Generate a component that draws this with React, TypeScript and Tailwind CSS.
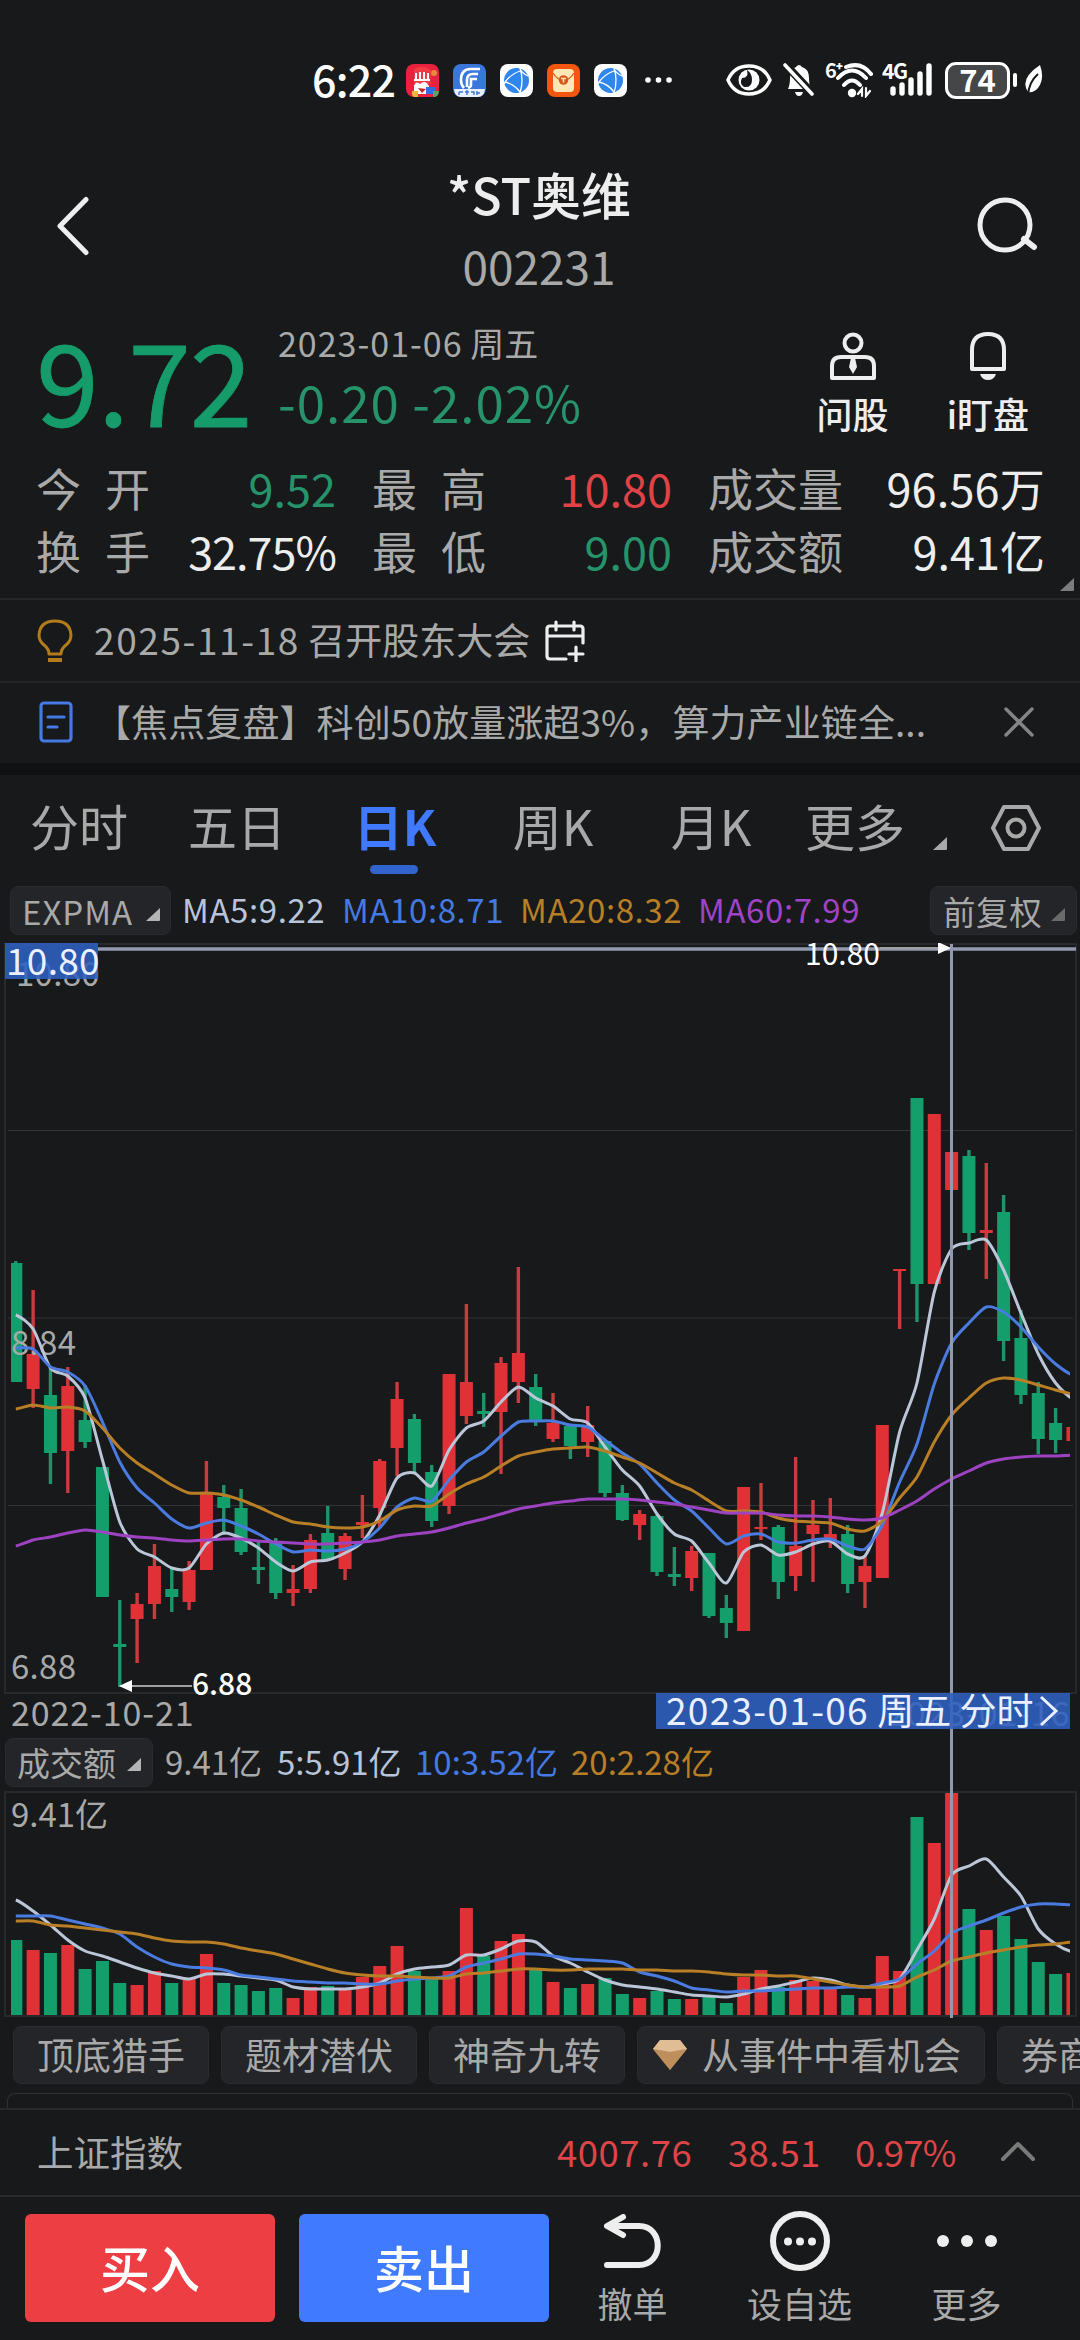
import type { ReactNode } from 'react';

type Dir = 'r' | 'g';
// [direction, high, body top, body bottom, low, volume bar height]
type Candle = [Dir, number, number, number, number, number];

const RED = '#e03236';
const GREEN = '#139e6b';
const WICK_RED = '#c93b3e';
const WICK_GREEN = '#20936a';
const STEP = 17.33;
const FIRST_X = 15.8;

const candles: Candle[] = [
  ['g', 1261, 1263, 1382, 1382, 75], ['r', 1290, 1354, 1389, 1408, 65], ['g', 1368, 1395, 1453, 1484, 62],
  ['r', 1367, 1386, 1451, 1493, 70], ['g', 1385, 1420, 1442, 1448, 46], ['g', 1467, 1467, 1597, 1597, 54],
  ['g', 1600, 1644, 1647, 1687, 32], ['r', 1593, 1604, 1619, 1663, 30], ['r', 1544, 1566, 1604, 1619, 44],
  ['g', 1568, 1589, 1597, 1612, 32], ['r', 1561, 1570, 1602, 1610, 36], ['r', 1461, 1493, 1570, 1570, 61],
  ['g', 1485, 1497, 1508, 1535, 32], ['g', 1489, 1508, 1552, 1555, 30], ['g', 1542, 1567, 1570, 1584, 24],
  ['g', 1538, 1541, 1593, 1599, 27], ['r', 1565, 1589, 1593, 1606, 17], ['r', 1534, 1540, 1589, 1593, 28],
  ['g', 1506, 1533, 1560, 1560, 29], ['r', 1533, 1536, 1569, 1580, 26], ['r', 1495, 1522, 1525, 1538, 38],
  ['r', 1459, 1461, 1508, 1528, 49], ['r', 1382, 1399, 1448, 1476, 69], ['g', 1414, 1419, 1463, 1474, 44],
  ['g', 1465, 1472, 1521, 1527, 36], ['r', 1374, 1374, 1506, 1514, 44], ['r', 1304, 1382, 1416, 1424, 107],
  ['g', 1393, 1411, 1414, 1427, 59], ['r', 1357, 1363, 1412, 1474, 74], ['r', 1267, 1353, 1382, 1403, 81],
  ['g', 1374, 1387, 1421, 1426, 46], ['r', 1393, 1423, 1439, 1442, 33], ['g', 1424, 1426, 1446, 1459, 27],
  ['r', 1406, 1425, 1442, 1457, 31], ['g', 1440, 1441, 1493, 1497, 37], ['g', 1485, 1493, 1520, 1521, 21],
  ['r', 1510, 1514, 1525, 1540, 17], ['g', 1515, 1516, 1572, 1576, 24], ['g', 1547, 1574, 1577, 1586, 16],
  ['r', 1546, 1551, 1578, 1591, 16], ['g', 1553, 1553, 1616, 1618, 18], ['g', 1595, 1608, 1623, 1638, 12],
  ['r', 1487, 1487, 1631, 1631, 38], ['r', 1483, 1527, 1529, 1540, 45], ['g', 1525, 1527, 1582, 1599, 28],
  ['r', 1457, 1546, 1576, 1591, 35], ['r', 1500, 1525, 1534, 1582, 34], ['r', 1498, 1534, 1541, 1548, 26],
  ['g', 1525, 1534, 1584, 1593, 20], ['r', 1556, 1566, 1582, 1608, 17], ['r', 1425, 1425, 1578, 1578, 59],
  ['r', 1269, 1269, 1271, 1329, 44], ['g', 1098, 1098, 1284, 1322, 198], ['r', 1114, 1114, 1284, 1284, 172],
  ['r', 1152, 1152, 1190, 1190, 222], ['g', 1150, 1156, 1233, 1250, 106], ['r', 1163, 1230, 1233, 1279, 85],
  ['g', 1195, 1212, 1341, 1361, 99], ['g', 1310, 1338, 1395, 1404, 76], ['g', 1382, 1393, 1439, 1454, 53],
  ['g', 1408, 1423, 1440, 1453, 41], ['r', 1427, 1427, 1441, 1441, 42],
];

const ma5 = [1315, 1329, 1368, 1376, 1398, 1460, 1522, 1549, 1557, 1568, 1568, 1544, 1533, 1538, 1548, 1562, 1571, 1562, 1560, 1553, 1542, 1515, 1478, 1473, 1486, 1450, 1428, 1421, 1402, 1387, 1398, 1406, 1419, 1423, 1447, 1470, 1486, 1514, 1534, 1541, 1563, 1583, 1552, 1545, 1555, 1552, 1544, 1541, 1554, 1556, 1513, 1432, 1383, 1292, 1249, 1243, 1240, 1270, 1313, 1354, 1383, 1399];
const ma10 = [1348, 1349, 1367, 1372, 1386, 1422, 1462, 1488, 1503, 1519, 1528, 1523, 1520, 1526, 1534, 1544, 1552, 1550, 1551, 1549, 1542, 1528, 1507, 1498, 1501, 1480, 1462, 1452, 1436, 1422, 1421, 1421, 1425, 1427, 1440, 1453, 1464, 1483, 1500, 1511, 1528, 1544, 1536, 1534, 1542, 1543, 1540, 1539, 1546, 1549, 1525, 1482, 1444, 1384, 1343, 1323, 1307, 1312, 1327, 1347, 1364, 1375];
const ma20 = [1409, 1405, 1408, 1407, 1411, 1428, 1448, 1463, 1474, 1485, 1493, 1493, 1495, 1500, 1507, 1515, 1522, 1524, 1527, 1528, 1527, 1521, 1510, 1506, 1506, 1494, 1484, 1477, 1466, 1456, 1452, 1449, 1448, 1447, 1451, 1457, 1463, 1473, 1483, 1490, 1501, 1511, 1511, 1512, 1518, 1521, 1522, 1523, 1529, 1531, 1521, 1498, 1477, 1442, 1415, 1398, 1383, 1378, 1380, 1385, 1390, 1394];
const ma60 = [1546, 1540, 1537, 1533, 1530, 1532, 1535, 1537, 1538, 1540, 1541, 1540, 1539, 1539, 1541, 1542, 1543, 1544, 1544, 1543, 1542, 1540, 1536, 1534, 1532, 1528, 1523, 1519, 1514, 1509, 1506, 1503, 1501, 1499, 1499, 1499, 1500, 1502, 1504, 1507, 1510, 1513, 1513, 1513, 1515, 1516, 1516, 1517, 1519, 1520, 1518, 1510, 1501, 1489, 1479, 1471, 1463, 1459, 1457, 1456, 1456, 1455];
const vol5 = [1900, 1911, 1925, 1940, 1951, 1956, 1962, 1968, 1973, 1976, 1979, 1974, 1974, 1976, 1978, 1980, 1987, 1989, 1989, 1989, 1987, 1983, 1974, 1969, 1967, 1965, 1955, 1955, 1949, 1941, 1942, 1956, 1963, 1972, 1980, 1985, 1987, 1989, 1992, 1995, 1996, 1997, 1994, 1989, 1986, 1982, 1978, 1980, 1985, 1987, 1984, 1979, 1950, 1919, 1875, 1866, 1859, 1877, 1896, 1929, 1944, 1952];
const vol10 = [1916, 1916, 1916, 1920, 1924, 1928, 1934, 1947, 1957, 1964, 1967, 1968, 1970, 1975, 1977, 1979, 1981, 1982, 1983, 1983, 1984, 1984, 1981, 1979, 1978, 1976, 1967, 1963, 1959, 1954, 1954, 1956, 1959, 1960, 1961, 1963, 1972, 1976, 1981, 1988, 1990, 1992, 1991, 1991, 1990, 1989, 1988, 1988, 1987, 1987, 1983, 1979, 1964, 1951, 1933, 1926, 1920, 1913, 1907, 1904, 1904, 1905];
const vol20 = [1921, 1921, 1925, 1926, 1928, 1930, 1932, 1934, 1938, 1941, 1942, 1942, 1944, 1948, 1951, 1954, 1959, 1964, 1969, 1973, 1975, 1976, 1976, 1977, 1978, 1978, 1974, 1973, 1971, 1969, 1969, 1970, 1970, 1969, 1969, 1969, 1970, 1970, 1971, 1971, 1972, 1974, 1975, 1975, 1976, 1976, 1979, 1982, 1985, 1987, 1987, 1986, 1977, 1970, 1961, 1957, 1953, 1950, 1947, 1945, 1944, 1942];

const xAt = (i: number) => FIRST_X + i * STEP;

// smooth curve through all points
const toPath = (ys: number[]) => {
  let d = `M${xAt(0)} ${ys[0]}`;
  for (let i = 0; i < ys.length - 1; i++) {
    const y0 = ys[Math.max(i - 1, 0)];
    const y3 = ys[Math.min(i + 2, ys.length - 1)];
    const c1 = ys[i] + (ys[i + 1] - y0) / 8;
    const c2 = ys[i + 1] - (y3 - ys[i]) / 8;
    d += `C${xAt(i) + STEP / 4} ${c1} ${xAt(i + 1) - STEP / 4} ${c2} ${xAt(i + 1)} ${ys[i + 1]}`;
  }
  return d;
};

const Curve = ({ ys, color }: { ys: number[]; color: string }) => (
  <path d={toPath(ys)} fill="none" stroke={color} strokeWidth="3" strokeLinejoin="round" />
);

const Corner = ({ className = 'text-[#b4b4b4]' }: { className?: string }) => (
  <svg viewBox="0 0 14 13" className={`h-[13px] w-[14px] ${className}`}>
    <path d="M14 0V12Q14 13 13 13H0Z" fill="currentColor" />
  </svg>
);

const GlobeApp = () => (
  <svg viewBox="0 0 33 33" className="size-[33px]">
    <rect width="33" height="33" rx="8" fill="#fff" />
    <circle cx="16.5" cy="16.5" r="12.5" fill="#2f86ee" />
    <path d="M20 4Q24 16 20 29M5 18Q11 10 20 7M5 18Q14 20 20 28M20 5Q23 10 28 12M5 18L4 20" fill="none" stroke="#fff" strokeWidth="1.3" />
  </svg>
);

const StatusBar = () => (
  <div className="flex h-[160px] items-center pl-[312px]">
    <span className="mb-[4px] w-[94px] text-[43px] leading-none font-medium tracking-[-0.8px] text-white">6:22</span>
    <div className="flex gap-[14px]">
      <svg viewBox="0 0 33 33" className="size-[33px]">
        <rect width="33" height="33" rx="8" fill="#e9213f" />
        <path d="M8 5Q17 0 25 6V20H8Z" fill="#f13a45" />
        <path d="M10 9v7M14 8v8M18 8v8M22 9v7M8 16h16" stroke="#fff" strokeWidth="2" />
        <circle cx="28" cy="9" r="3" fill="#e88a3c" />
        <path d="M8 22Q10 16 14 20Q19 15 23 22V30H8Z" fill="#fff" />
        <path d="M12 24l8 1-4 4Z" fill="#c9242b" />
        <path d="M6 27h6v6H8q-2-1-2-3Z" fill="#f4b73a" />
        <rect x="20" y="23" width="9" height="7" fill="#2f6fe0" />
        <path d="M27 27h6q0 5-4 6h-2Z" fill="#5aa55a" />
      </svg>
      <svg viewBox="0 0 33 33" className="size-[33px]">
        <rect width="33" height="33" rx="8" fill="#3a77dc" />
        <path d="M27 5H18Q8 5 8 16Q8 21 11 24M25 10H20Q14 10 14 16V23M24 15H18V21Q18 23 15 24" fill="none" stroke="#fff" strokeWidth="2.6" />
        <path d="M1 25H32Q31 33 25 33H8Q2 33 1 25Z" fill="#e8f1fc" />
        <path d="M6 28h4M6 28v3M12 28h4M14 26v5M18 28h3v3M24 27v4M23 29h4" stroke="#3a77dc" strokeWidth="1.4" fill="none" />
      </svg>
      <GlobeApp />
      <svg viewBox="0 0 33 33" className="size-[33px]">
        <rect width="33" height="33" rx="8" fill="#f4560f" />
        <rect x="6" y="5" width="21" height="23" rx="4" fill="#ffe7b5" />
        <path d="M6 9Q10 16 16.5 16Q23 16 27 9" fill="none" stroke="#d9661f" strokeWidth="1.5" />
        <circle cx="16.5" cy="16" r="4.8" fill="#d9581c" />
        <path d="M14 14.5h5M16.5 14.5v4" stroke="#ffe7b5" strokeWidth="1.5" />
      </svg>
      <GlobeApp />
    </div>
    <svg viewBox="0 0 28 6" className="ml-[18px] h-[6px] w-[28px]" fill="#fff">
      <circle cx="3" cy="3" r="2.8" />
      <circle cx="13.5" cy="3" r="2.8" />
      <circle cx="24" cy="3" r="2.8" />
    </svg>
    <svg viewBox="0 0 46 32" className="ml-[53px] h-[32px] w-[46px]">
      <path d="M2 16Q8 2 23 2T44 16Q38 30 23 30T2 16Z" fill="none" stroke="#fff" strokeWidth="3.4" />
      <circle cx="23" cy="16" r="10.5" fill="#fff" />
      <path d="M21 6Q23 14 16 14Q13 20 18 23Q26 24 26 16Q26 9 21 6Z" fill="#17191a" />
    </svg>
    <svg viewBox="0 0 32 34" className="ml-[11px] h-[34px] w-[32px]">
      <path d="M5 26Q7 22 7 15Q7 6 13 4Q16 0 19 4Q26 6 26 15Q26 22 28 26Z" fill="#fff" />
      <path d="M12 29h8q-1 4-4 4t-4-4Z" fill="#fff" />
      <path d="M1 0L31 32" stroke="#17191a" strokeWidth="8" />
      <path d="M2 2L29 31" stroke="#fff" strokeWidth="3.6" strokeLinecap="round" />
    </svg>
    <div className="relative ml-[10px] h-[36px] w-[48px]">
      <span className="absolute top-[-2px] left-0 text-[20px] leading-none font-bold tracking-[-1px] text-white">6⁺</span>
      <svg viewBox="0 0 48 36" className="h-[36px] w-[48px]" fill="none" stroke="#fff" strokeWidth="4" strokeLinecap="round">
        <path d="M21 5Q36-1 46 12M13 16Q27 1 41 16M19 23Q27 14 35 23" />
        <circle cx="27" cy="31" r="4.2" fill="#fff" stroke="none" />
        <path d="M37 34V27L33 32M41 26V34L45 29" strokeWidth="2.2" />
      </svg>
    </div>
    <div className="relative ml-[9px] h-[36px] w-[52px]">
      <span className="absolute top-[-2px] left-0 text-[21px] leading-none font-bold tracking-[-1.5px] text-white">4G</span>
      <svg viewBox="0 0 52 36" className="h-[36px] w-[52px]" stroke="#fff" strokeWidth="5.4" strokeLinecap="round">
        <path d="M11 27V31M20 23V31M29 18V31M38 12V31M47 4V31" />
      </svg>
    </div>
    <div className="ml-[11px] flex h-[37px] w-[65px] items-center justify-center rounded-[11px] border-[3px] border-white bg-[#454648] text-[31px] leading-none font-bold text-white">
      <span className="mb-[4px]">74</span>
    </div>
    <div className="ml-[3px] h-[14px] w-[4px] rounded bg-white" />
    <svg viewBox="0 0 20 30" className="ml-[6px] h-[30px] w-[20px]">
      <path d="M17 0Q22 14 15 23Q11 28 5 27Q-4 14 17 0Z" fill="#fff" />
      <path d="M15 9Q6 17 5 30" stroke="#17191a" strokeWidth="2" fill="none" />
    </svg>
  </div>
);

const Header = () => (
  <header className="flex h-[140px] items-center justify-between px-[41px]">
    <svg viewBox="0 0 60 60" className="mb-2 size-[60px]">
      <path d="M45 3.5L19 30L45 56.5" fill="none" stroke="#eee" strokeWidth="5" strokeLinecap="round" strokeLinejoin="round" />
    </svg>
    <div className="text-center">
      <h1 className="h-[70px] text-[50px] leading-[67px] font-medium text-[#ededed]">*ST奥维</h1>
      <p className="h-[70px] text-[46px] leading-[70px] text-[#a9a9a9]">002231</p>
    </div>
    <svg viewBox="0 0 62 60" className="mb-2 h-[60px] w-[62px]" fill="none" stroke="#eee" strokeWidth="5">
      <circle cx="28" cy="29" r="25" />
      <path d="M47 43L57 51" strokeWidth="6" strokeLinecap="round" />
    </svg>
  </header>
);

const Quote = () => (
  <section className="flex h-[156px] items-center pt-1 pr-[51px] pl-[36px]">
    <div className="mb-[4px] w-[242px] text-[113px] leading-none font-normal tracking-[-1px] text-[#159c6a] [-webkit-text-stroke:0.8px_#159c6a]">9.72</div>
    <div className="mb-4 whitespace-nowrap">
      <div className="h-[58px] text-[34px] leading-[58px] text-[#a9a9a9]"><span className="tracking-[1px]">2023-01-06</span> 周五</div>
      <div className="h-[58px] text-[51px] leading-[58px] tracking-[1px] text-[#26936a]">-0.20 -2.02%</div>
    </div>
    <div className="mt-[10px] ml-auto flex gap-[58px] text-[36px] leading-[50px] font-medium text-[#ededed]">
      <div className="flex flex-col items-center gap-[8px]">
        <svg viewBox="0 0 46 48" className="h-[48px] w-[46px]" fill="none" stroke="#eee" strokeWidth="4">
          <circle cx="23" cy="11" r="8.5" />
          <path d="M2 46V34Q2 25 11 25H35Q44 25 44 34V46Z" strokeLinejoin="round" />
          <path d="M21 26h4l2 9-4 7-4-7Z" fill="#eee" stroke="none" />
        </svg>
        问股
      </div>
      <div className="flex flex-col items-center gap-[8px]">
        <svg viewBox="0 0 40 48" className="h-[48px] w-[40px]">
          <path d="M4 37V18Q4 2 20 2T36 18V37Z" fill="none" stroke="#eee" strokeWidth="4" strokeLinejoin="round" />
          <path d="M12 42H28Q26 48 20 48T12 42Z" fill="#eee" />
        </svg>
        i盯盘
      </div>
    </div>
  </section>
);

interface StatProps {
  label: ReactNode;
  value: string;
  className: string;
}

const Stat = ({ label, value, className }: StatProps) => (
  <div className="flex h-[63px] items-center justify-between text-[45px] leading-none whitespace-nowrap">
    <span className="text-[#a9a9a9]">{label}</span>
    <span className={className}>{value}</span>
  </div>
);

const spaced = (text: string) => (
  <span className="flex w-[114px] justify-between">
    <span>{text[0]}</span>
    <span>{text[1]}</span>
  </span>
);

const Stats = () => (
  <section className="relative h-[142px]">
    <div className="grid grid-cols-[300px_300px_337px] gap-x-[36px] pl-[36px]">
      <Stat label={spaced('今开')} value="9.52" className="text-[#26936a]" />
      <Stat label={spaced('最高')} value="10.80" className="text-[#e04246]" />
      <Stat label="成交量" value="96.56万" className="tracking-[0.2px] text-[#ededed]" />
      <Stat label={spaced('换手')} value="32.75%" className="tracking-[-1px] text-[#ededed]" />
      <Stat label={spaced('最低')} value="9.00" className="text-[#26936a]" />
      <Stat label="成交额" value="9.41亿" className="text-[#ededed]" />
    </div>
    <Corner className="absolute right-[6px] bottom-[7px] text-[#7d7d7d]" />
  </section>
);

const News = () => (
  <section className="text-[37px] leading-none text-[#a9a9a9]">
    <div className="flex h-[83px] items-center border-t-2 border-[#242628] pl-[37px]">
      <svg viewBox="0 0 36 44" className="h-[44px] w-[36px]" fill="none" stroke="#b27c1c" strokeWidth="3">
        <path d="M12 35Q12 30 7 26Q2 22 2 16Q3 2 18 2T34 16Q34 22 29 26Q24 30 24 35Z" strokeLinejoin="round" />
        <path d="M11 41H25" strokeWidth="4" />
      </svg>
      <span className="mb-[3px] ml-[21px]"><span className="tracking-[1.6px]">2025-11-18</span> 召开股东大会</span>
      <svg viewBox="0 0 42 42" className="ml-[14px] size-[42px]" fill="none" stroke="#eee" strokeWidth="3.2" strokeLinecap="round">
        <path d="M22 39H6Q3 39 3 36V9Q3 6 6 6H36Q39 6 39 9V23M3 16H39M12 2V10M30 2V10M32 27V41M25 34H39" />
      </svg>
    </div>
    <div className="flex h-[82px] items-center border-t-2 border-[#242628] pl-[39px]">
      <svg viewBox="0 0 34 42" className="mb-[2px] h-[42px] w-[34px]" fill="none" stroke="#4579e4" strokeWidth="3.2">
        <rect x="2" y="2" width="30" height="38" rx="3" />
        <path d="M9 16H25M9 26H18" strokeLinecap="round" />
      </svg>
      <span className="mb-[4px] ml-[21px] tracking-[0.1px] whitespace-nowrap">【焦点复盘】科创50放量涨超3%，算力产业链全...</span>
      <svg viewBox="0 0 30 30" className="mr-[46px] mb-[2px] ml-auto size-[30px]" stroke="#858585" strokeWidth="3.4" strokeLinecap="round">
        <path d="M2 2L28 28M28 2L2 28" />
      </svg>
    </div>
    <div className="h-[12px] bg-[#101113]" />
  </section>
);

const periods = ['分时', '五日', '日K', '周K', '月K'];

const PeriodTabs = () => (
  <nav className="flex h-[111px] text-[49px] leading-none text-[#a9a9a9]">
    {periods.map((name) => (
      <div key={name} className={`relative w-[158px] pt-[25px] text-center ${name === '日K' ? 'font-bold text-[#4079fb]' : ''}`}>
        {name}
        {name === '日K' && <i className="absolute top-[90px] left-[54px] h-[9px] w-[48px] rounded-full bg-[#3264cd]" />}
      </div>
    ))}
    <div className="ml-[15px] pt-[25px] text-[50px]">更多</div>
    <Corner className="mt-[62px] ml-[28px]" />
    <svg viewBox="0 0 52 48" className="mt-[29px] ml-[43px] h-[48px] w-[52px]" fill="none" stroke="#a9a9a9" strokeWidth="4" strokeLinejoin="round">
      <path d="M14 3H38L49 24L38 45H14L3 24Z" />
      <circle cx="26" cy="24" r="8.5" />
    </svg>
  </nav>
);

const Pill = ({ className, children }: { className: string; children: ReactNode }) => (
  <div className={`flex h-[49px] shrink-0 items-center rounded-lg border border-[#2a2b2e] bg-[#242528] text-[#a9a9a9] ${className}`}>{children}</div>
);

const labelFont = '"Noto Sans CJK SC", sans-serif';

const PriceChart = () => (
  <svg viewBox="0 943 1080 795" className="block h-[795px] w-[1080px]" fontFamily={labelFont}>
    <g stroke="#28292c" strokeWidth="2" fill="none">
      <path d="M5 1693V944H1076V1693Z" />
      <path d="M8 1130.5H1073M8 1505.5H1073" stroke="#343536" strokeWidth="1" />
      <path d="M8 1318H1073" stroke="#232527" />
    </g>
    <clipPath id="plot">
      <rect x="11" y="943" width="1059" height="1080" />
    </clipPath>
    <g clipPath="url(#plot)">
      {candles.map(([dir, high, top, bottom, low], i) => (
        <g key={i}>
          <rect x={xAt(i) - 1.7} y={high} width="3.4" height={low - high} fill={dir === 'r' ? WICK_RED : WICK_GREEN} />
          <rect x={xAt(i) - 6.5} y={top} width="13" height={bottom - top} fill={dir === 'r' ? RED : GREEN} />
        </g>
      ))}
    </g>
    <g fill="#a9a9a9" fontSize="33" letterSpacing="0.300">
      <text x="16" y="986">10.80</text>
      <text x="11" y="1355">8.84</text>
      <text x="11" y="1679">6.88</text>
      <text x="11" y="1726" fontSize="34" letterSpacing="0.900">2022-10-21</text>
      <text x="887" y="1726" fontSize="34" letterSpacing="0.900">2023-01-16</text>
    </g>
    <g clipPath="url(#plot)">
      <Curve ys={ma5} color="#bcc6d9" />
      <Curve ys={ma10} color="#4a7ce0" />
      <Curve ys={ma20} color="#b97f26" />
      <Curve ys={ma60} color="#9d43c2" />
    </g>
    <path d="M98 949H1076" stroke="#9299ae" strokeWidth="3.5" />
    <path d="M192 1686H130M880 948H940" stroke="#a0a0a0" strokeWidth="2" />
    <path d="M119 1686L132 1680V1692ZM951 948L938 942V954Z" fill="#fff" />
    <g fill="#fff" fontSize="30">
      <text x="192" y="1695" fontWeight="500">6.88</text>
      <text x="805" y="965">10.80</text>
    </g>
  </svg>
);

const VolumeChart = () => (
  <svg viewBox="0 1790 1080 228" className="block h-[228px] w-[1080px]" fontFamily={labelFont}>
    <path d="M5 2016V1792H1076V2016Z" fill="none" stroke="#28292c" strokeWidth="2" />
    <g clipPath="url(#volume)">
      <clipPath id="volume">
        <rect x="11" y="1790" width="1059" height="228" />
      </clipPath>
      {candles.map(([dir, , , , , vol], i) => (
        <rect key={i} x={xAt(i) - 6.5} y={2015 - vol} width="13" height={vol} fill={dir === 'r' ? RED : GREEN} />
      ))}
      <Curve ys={vol5} color="#bcc6d9" />
      <Curve ys={vol10} color="#4a7ce0" />
      <Curve ys={vol20} color="#b97f26" />
    </g>
    <text x="11" y="1827" fontSize="33" fill="#a9a9a9">9.41亿</text>
  </svg>
);

const Charts = () => (
  <section className="relative">
    <PriceChart />
    <div className="flex h-[52px] items-start pl-[5px] text-[33px] leading-[47px] whitespace-nowrap">
      <Pill className="w-[148px] justify-between pr-[11px] pl-[11px] text-[33px]">
        成交额
        <Corner className="mt-1 text-[#b4b4b4]" />
      </Pill>
      <span className="ml-[12px] w-[112px] text-[#a9a9a9]">9.41亿</span>
      <span className="w-[138px] text-[#b9c4da]">5:5.91亿</span>
      <span className="w-[156px] text-[#4579e4]">10:3.52亿</span>
      <span className="text-[#b97f26]">20:2.28亿</span>
    </div>
    <VolumeChart />
    {/* crosshair and its labels */}
    <div className="absolute top-[1px] left-[950px] h-[1074px] w-[3px] bg-[#9299ae]" />
    <div className="absolute top-0 left-[5px] h-[36px] w-[93px] bg-[#2f60c0]/88 pl-[1px] text-[37px] leading-[32px] tracking-[0.3px] text-[#eaf0ff]">10.80</div>
    <div className="absolute top-[750px] left-[656px] flex h-[36px] w-[414px] items-center bg-[#2f60c0]/88 pl-[10px] text-[37px] leading-[32px] whitespace-nowrap text-[#eaf0ff]">
      <span className="mb-1"><span className="tracking-[1.3px]">2023-01-06</span> 周五 分时</span>
      <svg viewBox="0 0 20 32" className="ml-[5px] h-[32px] w-[20px]">
        <path d="M2 2L17 16L2 30" fill="none" stroke="#eaf0ff" strokeWidth="3" />
      </svg>
    </div>
  </section>
);

const Chip = ({ children }: { children: ReactNode }) => (
  <div className="flex h-[58px] shrink-0 items-center rounded-lg border border-[#2a2b2e] bg-[#242528] px-[23px] pb-px">{children}</div>
);

const Chips = () => (
  <div className="mt-[8px] flex gap-[12px] overflow-hidden pl-[13px] text-[37px] leading-none whitespace-nowrap text-[#a9a9a9]">
    <Chip>顶底猎手</Chip>
    <Chip>题材潜伏</Chip>
    <Chip>神奇九转</Chip>
    <Chip>
      <svg viewBox="0 0 34 30" className="mr-[15px] -ml-[8px] h-[30px] w-[34px]">
        <path d="M7 0H27L34 9L17 30L0 9Z" fill="#c79a6c" />
        <path d="M7 0H27L34 9L17 12L0 9Z" fill="#e0bd94" />
        <path d="M0 9L17 12L34 9L17 30Z" fill="#b98753" opacity="0.6" />
      </svg>
      从事件中看机会
    </Chip>
    <Chip>券商</Chip>
  </div>
);

const IndexBar = () => (
  <div className="flex h-[87px] items-center border-t-2 border-[#27292b] pr-[44px] pl-[37px] text-[36.5px] leading-none text-[#dd4548]">
    <span className="text-[#a9a9a9]">上证指数</span>
    <span className="ml-auto w-[171px] tracking-[0.5px]">4007.76</span>
    <span className="w-[127px] tracking-[0.3px]">38.51</span>
    <span className="w-[145px] tracking-[-0.8px]">0.97%</span>
    <svg viewBox="0 0 36 22" className="mb-[4px] h-[22px] w-[36px]">
      <path d="M3 19L18 4L33 19" fill="none" stroke="#7a7a7a" strokeWidth="4" strokeLinecap="round" strokeLinejoin="round" />
    </svg>
  </div>
);

const BottomActions = () => (
  <div className="flex h-[145px] border-t-2 border-[#27292b] pt-[17px] pl-[25px] text-[35px] leading-[46px] text-[#a9a9a9]">
    <button className="h-[108px] w-[250px] rounded-md bg-[#ed3e43] pb-1 text-[50px] font-medium text-white">买入</button>
    <button className="ml-[24px] h-[108px] w-[250px] rounded-md bg-[#407bff] pb-1 text-[50px] font-medium text-white">卖出</button>
    <div className="flex w-[167px] flex-col items-center">
      <svg viewBox="0 0 60 60" className="h-[60px] w-[60px]" fill="none" stroke="#eee" strokeWidth="6" strokeLinecap="round" strokeLinejoin="round">
        <path d="M20 3L4 12L20 21M5 12H36C61 12 61 51 36 51H4" />
      </svg>
      <span className="mt-[6px]">撤单</span>
    </div>
    <div className="flex w-[167px] flex-col items-center">
      <svg viewBox="0 0 60 60" className="-mt-[3px] mb-[3px] size-[60px]">
        <circle cx="30" cy="30" r="27" fill="none" stroke="#eee" strokeWidth="6" />
        <g fill="#eee">
          <circle cx="18" cy="30.5" r="4" />
          <circle cx="30" cy="30.5" r="4" />
          <circle cx="42" cy="30.5" r="4" />
        </g>
      </svg>
      <span className="mt-[6px]">设自选</span>
    </div>
    <div className="flex w-[167px] flex-col items-center">
      <svg viewBox="0 0 60 60" className="-mt-[3px] mb-[3px] size-[60px]" fill="#eee">
        <circle cx="6" cy="30" r="6" />
        <circle cx="30" cy="30" r="6" />
        <circle cx="54" cy="30" r="6" />
      </svg>
      <span className="mt-[6px]">更多</span>
    </div>
  </div>
);

export default function App() {
  return (
    <div className="flex h-[2340px] w-[1080px] flex-col overflow-hidden bg-[#17191a] font-['Noto_Sans_CJK_SC',sans-serif]">
      <StatusBar />
      <Header />
      <Quote />
      <Stats />
      <News />
      <PeriodTabs />
      <div className="flex h-[57px] items-start pr-[3px] pl-[10px] text-[33px] leading-[46px] tracking-[0.6px] whitespace-nowrap">
        <Pill className="w-[161px] justify-between pr-[10px] pl-[11px] text-[33px] tracking-[1px]">
          EXPMA
          <Corner className="mt-2 text-[#b4b4b4]" />
        </Pill>
        <span className="ml-[11px] w-[160px] text-[#b9c4da]">MA5:9.22</span>
        <span className="w-[178px] text-[#4579e4]">MA10:8.71</span>
        <span className="w-[178px] text-[#b97f26]">MA20:8.32</span>
        <span className="text-[#a043c6]">MA60:7.99</span>
        <Pill className="ml-auto w-[147px] justify-between pr-[11px] pl-[12px] text-[32.5px]">
          前复权
          <Corner className="mt-2 text-[#6a6a6a]" />
        </Pill>
      </div>
      <Charts />
      <Chips />
      <div className="mx-[7px] mt-[9px] h-[15px] rounded-t-lg border border-b-0 border-[#2f3133]" />
      <IndexBar />
      <BottomActions />
    </div>
  );
}
